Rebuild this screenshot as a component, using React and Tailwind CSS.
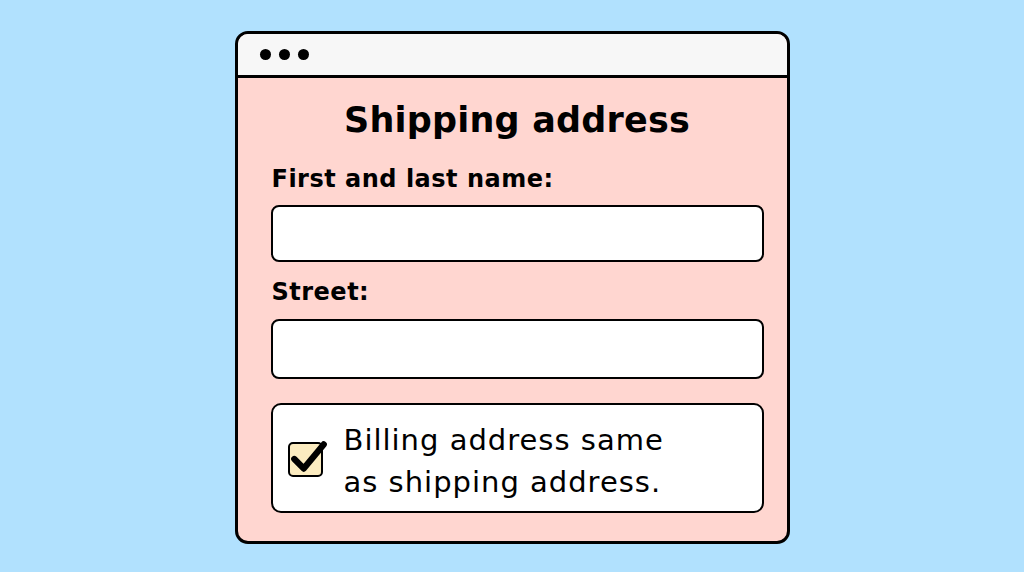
export default function App() {
  return (
    <div className="w-[1024px] h-[572px] bg-[#b1e1fe] flex items-start justify-center pt-[31px] font-['DejaVu_Sans',sans-serif] text-black">
      {/* Browser window */}
      <div className="w-[555px] h-[513px] border-[3px] border-black rounded-[13px] overflow-hidden flex flex-col bg-[#ffd6d0]">
        {/* Title bar */}
        <div className="h-[44px] bg-[#f7f7f7] border-b-[3px] border-black flex items-center gap-[8px] pl-[22px] shrink-0">
          <span className="w-[11px] h-[11px] rounded-full bg-black" />
          <span className="w-[11px] h-[11px] rounded-full bg-black" />
          <span className="w-[11px] h-[11px] rounded-full bg-black" />
        </div>

        {/* Form */}
        <div className="flex flex-col pl-[33px] pr-[23px]">
          <h1 className="text-center text-[35px] font-bold leading-none mt-[25px] mb-[29px] tracking-[0.2px]">
            Shipping address
          </h1>
          <label className="text-[24px] font-bold leading-none mb-[14px] pl-[1px] tracking-[0.5px]">First and last name:</label>
          <div className="h-[57px] bg-white border-2 border-black rounded-[8px]" />
          <label className="text-[24px] font-bold leading-none mt-[18px] mb-[15px] pl-[1px] tracking-[0.5px]">Street:</label>
          <div className="h-[60px] bg-white border-2 border-black rounded-[8px]" />

          {/* Billing checkbox */}
          <div className="h-[110px] mt-[24px] bg-white border-2 border-black rounded-[10px] flex items-center pl-[15px] gap-[21px]">
            <div className="relative w-[35px] h-[35px] bg-[#fcecc0] border-2 border-black rounded-[5px] shrink-0 mt-[2px]">
              <svg viewBox="0 0 40 40" className="absolute -left-[2px] -top-[8px] w-[42px] h-[42px]">
                <path d="M6 22 L15 31 L34 8" fill="none" stroke="#000" strokeWidth="6" strokeLinecap="round" strokeLinejoin="round" />
              </svg>
            </div>
            <p className="text-[29px] leading-[42px] tracking-[1px] pt-[6px]">
              Billing address same
              <br />
              as shipping address.
            </p>
          </div>
        </div>
      </div>
    </div>
  );
}
